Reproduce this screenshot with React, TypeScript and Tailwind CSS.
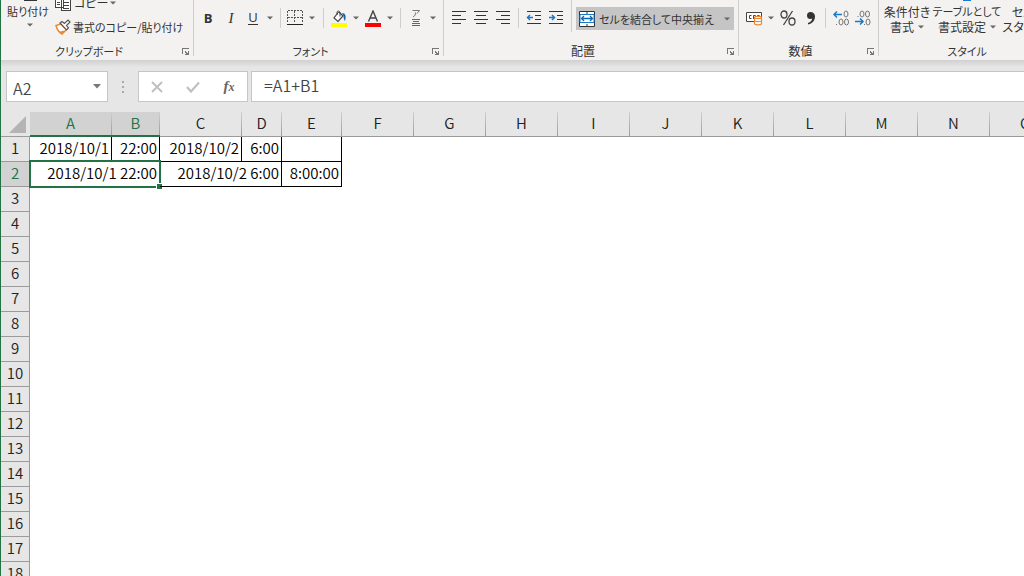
import React from "react";

const COLUMNS = [
  { name: "A", width: "w-[82px]" },
  { name: "B", width: "w-[48px]" },
  { name: "C", width: "w-[82px]" },
  { name: "D", width: "w-[40px]" },
  { name: "E", width: "w-[60px]" },
  ..."FGHIJKLMNOPQRSTUVWXYZ".split("").map((name) => ({ name, width: "w-[72px]" })),
];

const EMPTY_ROWS = Array.from({ length: 38 }, (_, i) => i + 3);

function Caret() {
  return (
    <svg width="6" height="4" viewBox="0 0 6 4" className="shrink-0" aria-hidden="true">
      <path d="M0 0.5h6L3 3.5z" fill="#666" />
    </svg>
  );
}

function Tool({ label, children, width = "w-[22px]" }: { label: string; children: React.ReactNode; width?: string }) {
  return (
    <button type="button" aria-label={label} className={`flex h-6 shrink-0 items-center justify-center ${width}`}>
      {children}
    </button>
  );
}

function Divider({ className = "mx-1 h-5" }: { className?: string }) {
  return <div className={`w-px shrink-0 bg-[#d0cecc] ${className}`} />;
}

function Group({
  label,
  width,
  labelSize = "text-[11px]",
  launcher = true,
  children,
}: {
  label: string;
  width: string;
  labelSize?: string;
  launcher?: boolean;
  children: React.ReactNode;
}) {
  return (
    <section aria-label={label} className={`flex shrink-0 ${width}`}>
      <div className="flex min-w-0 flex-1 flex-col">
        <div className="h-[42px]">{children}</div>
        <div className="flex h-[18px] items-center">
          <span className={`flex-1 text-center ${labelSize}`}>{label}</span>
          <span className="flex w-4 shrink-0 pt-0.5 pl-[5px]">
            {launcher && (
              <button type="button" aria-label={`${label}の設定`}>
                <svg width="8" height="8" viewBox="0 0 8 8" shapeRendering="crispEdges" className="block" aria-hidden="true">
                  <path d="M0.5 6V0.5H7" fill="none" stroke="#777" />
                  <path d="M3 3h1v1h1v1h1V3h1v4H3V6h1V5H3z" fill="#777" />
                </svg>
              </button>
            )}
          </span>
        </div>
      </div>
      <Divider className="h-14" />
    </section>
  );
}

function Lines({ d, children, label }: { d: string; label: string; children?: React.ReactNode }) {
  return (
    <Tool label={label}>
      <svg width="16" height="16" viewBox="0 0 16 16" aria-hidden="true">
        <path d={d} stroke="#333" fill="none" shapeRendering="crispEdges" />
        {children}
      </svg>
    </Tool>
  );
}

function Ribbon() {
  return (
    <header className="flex h-[60px] shrink-0 overflow-hidden bg-[#f3f2f1] text-[12px] leading-4 text-[#333] [font-feature-settings:'palt']">
      <Group label="クリップボード" width="w-[193px]">
        <div className="flex text-[11px]">
          <button type="button" className="-mt-2 flex w-[54px] flex-col items-center">
            <svg width="18" height="11" viewBox="0 0 18 11" aria-hidden="true">
              <path d="M5 0h13v9H5z" fill="#333" />
            </svg>
            <span>貼り付け</span>
            <span className="flex h-3 items-center pl-1">
              <Caret />
            </span>
          </button>
          <div className="-mt-[9px] flex flex-col">
            <button type="button" className="flex h-6 items-center text-[12px]">
              <svg width="17" height="17" viewBox="0 0 17 17" className="mr-0.5" aria-hidden="true">
                <g fill="#fff" stroke="#444" shapeRendering="crispEdges">
                  <path d="M0.5 1.5h8v11h-8zM6.5 4.5h9v11h-9z" />
                  <path d="M2 7.5h3M2 9.5h3M8 7.5h6M8 10.5h6M8 13.5h6" />
                </g>
              </svg>
              コピー
              <span className="ml-0.5">
                <Caret />
              </span>
            </button>
            <button type="button" className="flex h-6 items-center">
              <svg width="16" height="16" viewBox="0 0 16 16" className="mr-0.5" aria-hidden="true">
                <path d="M1 6.500L6 5l5.500 5.500L7 15C4 13.500 2 10.500 1 6.500z" fill="#fff" stroke="#ed8733" strokeWidth="1.500" />
                <path d="M4 12l2 .5 2-1 1.500 1-2.500 2c-1.200-.6-2.200-1.400-3-2.500z" fill="#ed8733" />
                <path d="M5 4l2-1.500 2.500 2L13 1l2 2-3.500 3.500 2 2.500-2 2z" fill="#fff" stroke="#555" strokeWidth="1.200" />
              </svg>
              <span className="whitespace-nowrap">書式のコピー/貼り付け</span>
            </button>
          </div>
        </div>
      </Group>

      <Group label="フォント" width="w-[250px]">
        <div className="flex h-9 items-center pl-[3px]">
          <Tool label="太字">
            <span className="font-['Open_Sans',sans-serif] text-[13px] font-bold">B</span>
          </Tool>
          <Tool label="斜体" width="w-6">
            <span className="font-['Liberation_Serif',serif] text-[15px] italic">I</span>
          </Tool>
          <Tool label="下線" width="w-5">
            <span className="border-b border-[#333] font-['Open_Sans',sans-serif] text-[13px] leading-[13px]">U</span>
          </Tool>
          <Tool label="下線の種類" width="w-[14px]">
            <Caret />
          </Tool>
          <Divider className="mx-[3px] h-5" />
          <Tool label="罫線">
            <svg width="16" height="16" viewBox="0 0 16 16" shapeRendering="crispEdges" aria-hidden="true">
              <path d="M0.500 1v12M15.500 1v12M7.500 1v12M1 0.500h14M1 7.500h14" stroke="#555" strokeDasharray="2 1" />
              <path d="M0 14.500h16" stroke="#222" />
            </svg>
          </Tool>
          <Tool label="罫線の種類" width="w-3">
            <Caret />
          </Tool>
          <Divider className="mr-1 ml-[5px] h-5" />
          <Tool label="塗りつぶしの色">
            <svg width="16" height="17" viewBox="0 0 16 17" aria-hidden="true">
              <path d="M7.500 2L3 8l4 3.500L12 6 8 2" fill="#fff" stroke="#444" strokeWidth="1.200" />
              <path d="M6 5V2.500C6 0.500 9 0.500 9 3v3.500" fill="none" stroke="#444" />
              <path d="M11 3c3.500 0 4.500 3.500 3 8-1.200-1-1.200-3-1.500-5z" fill="#1068b0" />
              <path d="M0 13h16v4H0z" fill="#ff0" />
            </svg>
          </Tool>
          <Tool label="塗りつぶしの色の一覧" width="w-3">
            <Caret />
          </Tool>
          <Tool label="フォントの色">
            <svg width="16" height="17" viewBox="0 0 16 17" aria-hidden="true">
              <path d="M3.500 11.500L8 1l4.500 10.500M5 8h6" fill="none" stroke="#444" strokeWidth="1.400" />
              <path d="M0 13h16v4H0z" fill="#f00" />
            </svg>
          </Tool>
          <Tool label="フォントの色の一覧" width="w-3">
            <Caret />
          </Tool>
          <Divider />
          <Tool label="ふりがな">
            <svg width="10" height="18" viewBox="0 0 10 18" aria-hidden="true">
              <path d="M1.500 1.500h7L6 4.500M4.500 3.500c0 2-.5 3.500-2.500 4.500" fill="none" stroke="#777" />
              <path d="M1 10.500h8M2 12.500h6M1 14.500h8M1 16.500h8" stroke="#666" />
            </svg>
          </Tool>
          <Tool label="ふりがなの設定" width="w-3">
            <Caret />
          </Tool>
        </div>
      </Group>

      <Group label="配置" width="w-[295px]" labelSize="text-[12px]">
        <div className="flex items-start">
          <div className="flex h-9 shrink-0 items-center pl-1">
            <Lines label="左揃え" d="M1 1.500h14M1 5.500h9M1 9.500h14M1 13.500h9" />
            <Lines label="中央揃え" d="M1 1.500h14M3 5.500h10M1 9.500h14M3 13.500h10" />
            <Lines label="右揃え" d="M1 1.500h14M6 5.500h9M1 9.500h14M6 13.500h9" />
            <Divider />
            <Lines label="インデントを減らす" d="M1 1.500h14M9 5.500h6M9 9.500h6M1 13.500h14">
              <path d="M1.500 7.500H7M4 5L1.500 7.500 4 10" fill="none" stroke="#1979ca" strokeWidth="1.500" />
            </Lines>
            <Lines label="インデントを増やす" d="M1 1.500h14M9 5.500h6M9 9.500h6M1 13.500h14">
              <path d="M1 7.500h5.500M4 5l2.500 2.500L4 10" fill="none" stroke="#1979ca" strokeWidth="1.500" />
            </Lines>
          </div>
          <Divider className="mx-1 h-8" />
          <button type="button" className="mt-[7px] mr-1 flex h-[23px] flex-1 items-center bg-[#c5c5c5] pr-1 pl-[3px] text-[11px]">
            <svg width="16" height="16" viewBox="0 0 16 16" className="mr-1 shrink-0" aria-hidden="true">
              <path d="M0.500 0.500h15v15h-15z" fill="#fff" stroke="#333" />
              <path d="M8 0v3M8 13v3" stroke="#333" />
              <path d="M1 3.500h14v8H1z" fill="#fff" stroke="#1979ca" />
              <path d="M2.500 7.500h11M5 5L2.500 7.500 5 10M11 5l2.500 2.500L11 10" fill="none" stroke="#1068b0" strokeWidth="1.300" />
            </svg>
            <span className="flex-1 text-left whitespace-nowrap">セルを結合して中央揃え</span>
            <Caret />
          </button>
        </div>
      </Group>

      <Group label="数値" width="w-[140px]" labelSize="text-[12px]">
        <div className="flex h-9 items-center pl-1">
          <Tool label="通貨表示形式">
            <svg width="17" height="15" viewBox="0 0 17 15" aria-hidden="true">
              <path d="M0.500 1.500h15v9h-15z" fill="#fff" stroke="#444" />
              <path d="M5.500 4.500h-2v3h2M7.500 8V4.500h2V8M11.500 8V4.500h2" fill="none" stroke="#444" />
              <path d="M8.500 6.500c0-1.500 7-1.500 7 0v6c0 1.800-7 1.800-7 0z" fill="#fff" stroke="#ed8733" strokeWidth="1.200" />
              <path d="M8.500 6.500c0 1.500 7 1.500 7 0M8.500 9.500c0 1.500 7 1.500 7 0" fill="none" stroke="#ed8733" strokeWidth="1.200" />
            </svg>
          </Tool>
          <Tool label="通貨の種類" width="w-3">
            <Caret />
          </Tool>
          <Tool label="パーセント スタイル">
            <svg width="16" height="16" viewBox="0 0 16 16" aria-hidden="true">
              <g fill="none" stroke="#444" strokeWidth="1.300">
                <ellipse cx="4" cy="4.500" rx="3" ry="3.500" />
                <ellipse cx="12" cy="11.500" rx="3" ry="3.500" />
                <path d="M12.500 1l-9 14" />
              </g>
            </svg>
          </Tool>
          <Tool label="桁区切りスタイル" width="w-6">
            <svg width="10" height="14" viewBox="0 0 10 14" aria-hidden="true">
              <path d="M4.500 1a3.500 3.500 0 0 0 0 7c1 0 1.300-.2 1.700-.4C6 9.800 4.500 11.200 2 12v1.500C6.500 12.500 9 9.500 9 5.500 9 2.500 7 1 4.500 1z" fill="#333" />
            </svg>
          </Tool>
          <Divider className="mr-1 ml-0.5 h-5" />
          <Tool label="小数点以下の表示桁数を増やす">
            <svg width="16" height="16" viewBox="0 0 16 16" aria-hidden="true">
              <path d="M1 4.500h8M4 1.500l-3 3 3 3" fill="none" stroke="#1979ca" strokeWidth="1.500" />
              <g fill="none" stroke="#777">
                <ellipse cx="13" cy="4" rx="2" ry="3" />
                <ellipse cx="8" cy="12" rx="2" ry="3" />
                <ellipse cx="13.500" cy="12" rx="2" ry="3" />
                <path d="M3 14.500h1" />
              </g>
            </svg>
          </Tool>
          <Tool label="小数点以下の表示桁数を減らす">
            <svg width="16" height="16" viewBox="0 0 16 16" aria-hidden="true">
              <path d="M0 11.500h8M5 8.500l3 3-3 3" fill="none" stroke="#1979ca" strokeWidth="1.500" />
              <g fill="none" stroke="#777">
                <ellipse cx="7" cy="4" rx="2" ry="3" />
                <ellipse cx="12.500" cy="4" rx="2" ry="3" />
                <ellipse cx="13" cy="12" rx="2" ry="3" />
                <path d="M2.500 6.500h1M9 14.500h1" />
              </g>
            </svg>
          </Tool>
        </div>
      </Group>

      <Group label="スタイル" width="w-[193px]" launcher={false}>
        <div className="flex pt-1 leading-[15px] whitespace-nowrap">
          <button type="button" className="flex w-14 flex-col items-center">
            <span>条件付き</span>
            <span className="flex items-center gap-1">
              書式
              <Caret />
            </span>
          </button>
          <button type="button" className="relative flex w-16 flex-col items-center">
            <span className="absolute -top-1 left-7 h-px w-2 bg-[#1979ca]" />
            <span className="text-[11px]">テーブルとして</span>
            <span className="flex items-center gap-1">
              書式設定
              <Caret />
            </span>
          </button>
          <button type="button" className="flex w-[60px] flex-col items-center">
            <span>セルの</span>
            <span className="flex items-center gap-1">
              スタイル
              <Caret />
            </span>
          </button>
        </div>
      </Group>
    </header>
  );
}

function FormulaBar() {
  return (
    <div className="flex shrink-0 bg-linear-to-b from-[#d0d0d0] to-[#e6e6e6] to-[7px] pt-[11px] pb-[10px] pl-[5px] text-[16px] font-[350] text-[#444]">
      <div className="flex h-[31px] w-[102px] shrink-0 items-center border border-[#c6c6c6] bg-white">
        <input aria-label="名前ボックス" defaultValue="A2" className="w-full min-w-0 flex-1 bg-transparent pt-0.5 pl-1.5 outline-none" />
        <button type="button" aria-label="名前の一覧" className="flex h-full w-5 items-center justify-center">
          <svg width="8" height="5" viewBox="0 0 8 5" aria-hidden="true">
            <path d="M0 0h8L4 4.500z" fill="#777" />
          </svg>
        </button>
      </div>
      <div className="flex w-[30px] shrink-0 flex-col items-center justify-center gap-[3px]">
        <span className="size-0.5 bg-[#aaa]" />
        <span className="size-0.5 bg-[#aaa]" />
        <span className="size-0.5 bg-[#aaa]" />
      </div>
      <div className="flex h-[31px] w-[110px] shrink-0 items-center border border-[#c6c6c6] bg-white">
        <Tool label="キャンセル" width="w-9">
          <svg width="12" height="12" viewBox="0 0 12 12" aria-hidden="true">
            <path d="M1 1l10 10M11 1L1 11" stroke="#c0c0c0" strokeWidth="2" />
          </svg>
        </Tool>
        <Tool label="入力" width="w-9">
          <svg width="14" height="12" viewBox="0 0 14 12" aria-hidden="true">
            <path d="M1 6l4 4.500L13 1.500" fill="none" stroke="#c0c0c0" strokeWidth="2.200" />
          </svg>
        </Tool>
        <Tool label="関数の挿入" width="w-9">
          <span className="font-['Liberation_Serif',serif] text-[15px] leading-4 font-bold text-[#666] italic">
            f<span className="text-[12px]">x</span>
          </span>
        </Tool>
      </div>
      <input
        aria-label="数式バー"
        defaultValue="=A1+B1"
        className="ml-[3px] h-[31px] min-w-0 flex-1 border border-r-0 border-[#c6c6c6] bg-white pb-[3px] pl-3 outline-none"
      />
    </div>
  );
}

function RowHeader({ row, selected = false }: { row: number; selected?: boolean }) {
  return (
    <th
      scope="row"
      className={`h-[25px] border-r border-b border-[#9b9b9b] p-0 pb-0.5 text-center font-[350] ${
        selected ? "bg-[#d2d2d2] text-[#217346]" : "bg-[#e6e6e6] text-[#222]"
      }`}
    >
      {row}
    </th>
  );
}

function Cell({ children, span = 1 }: { children?: React.ReactNode; span?: number }) {
  return (
    <td colSpan={span} className="relative border-r border-b border-black p-0 pr-0.5 pb-0.5 text-right">
      {children}
    </td>
  );
}

function Sheet() {
  return (
    <main className="min-h-0 flex-1 overflow-hidden bg-white">
      <table className="w-[1853px] table-fixed border-separate border-spacing-0 text-[15px] leading-[22px] font-[350] text-black">
        <thead>
          <tr className="bg-[#e6e6e6]">
            <th aria-label="すべて選択" className="h-[25px] w-[29px] border-b border-[#9b9b9b] p-0">
              <svg width="17" height="17" viewBox="0 0 17 17" className="ml-2 block" aria-hidden="true">
                <path d="M17 0v17H0z" fill="#b4b4b4" />
              </svg>
            </th>
            {COLUMNS.map(({ name, width }) => {
              const selected = name === "A" || name === "B";
              return (
                <th
                  key={name}
                  scope="col"
                  className={`h-[25px] p-0 font-[350] ${width} ${
                    selected
                      ? "border-b-2 border-[#217346] bg-[#d2d2d2] text-[#217346]"
                      : "border-b border-[#9b9b9b] text-[#222]"
                  }`}
                >
                  <div className={`flex ${selected ? "h-[23px]" : "h-6"}`}>
                    <span className="flex-1">{name}</span>
                    <span className="w-px bg-linear-to-b from-[#cfcfcf] to-[#9b9b9b]" />
                  </div>
                </th>
              );
            })}
          </tr>
        </thead>
        <tbody>
          <tr>
            <RowHeader row={1} />
            <Cell>2018/10/1</Cell>
            <Cell>22:00</Cell>
            <Cell>2018/10/2</Cell>
            <Cell>6:00</Cell>
            <Cell />
          </tr>
          <tr>
            <RowHeader row={2} selected />
            <Cell span={2}>
              2018/10/1 22:00
              <span className="pointer-events-none absolute -top-0.5 -right-0.5 -bottom-0.5 -left-px border-2 border-[#217346]">
                <span className="absolute -right-1 -bottom-1 size-[7px] border border-white bg-[#217346]" />
              </span>
            </Cell>
            <Cell span={2}>2018/10/2 6:00</Cell>
            <Cell>8:00:00</Cell>
          </tr>
          {EMPTY_ROWS.map((row) => (
            <tr key={row}>
              <RowHeader row={row} />
              <td colSpan={COLUMNS.length} />
            </tr>
          ))}
        </tbody>
      </table>
    </main>
  );
}

export default function App() {
  return (
    <div
      lang="ja"
      className="flex h-screen flex-col overflow-hidden border-l border-[#217346] bg-[#e6e6e6] font-['Noto_Sans_CJK_JP',sans-serif]"
    >
      <Ribbon />
      <FormulaBar />
      <Sheet />
    </div>
  );
}
